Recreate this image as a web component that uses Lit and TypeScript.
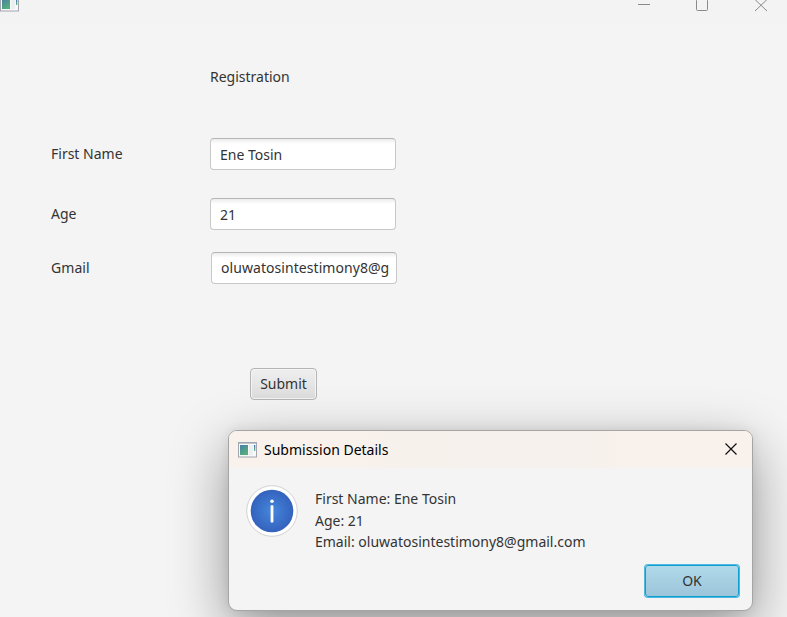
import { LitElement, html, css, svg } from "lit";
import { customElement, property } from "lit/decorators.js";

const cross = svg`<path d="M.5 .5L11.5 11.5M11.5 .5L.5 11.5" />`;

@customElement("window-icon")
class WindowIcon extends LitElement {
  static styles = css`
    :host { display: block; width: 19px; height: 16px; }
    svg { display: block; }
  `;
  render() {
    return html`<svg width="19" height="16" viewBox="0 0 19 16">
      <defs>
        <linearGradient id="pane" x1="0" y1="0" x2="0.6" y2="1">
          <stop offset="0" stop-color="#4a7fa6" /><stop offset="1" stop-color="#55b078" />
        </linearGradient>
        <linearGradient id="bar" x1="0" y1="0" x2="0" y2="1">
          <stop offset="0" stop-color="#4668b8" /><stop offset="1" stop-color="#62bd84" />
        </linearGradient>
      </defs>
      <rect x=".5" y=".5" width="18" height="14.5" fill="#f7f8fa" stroke="#a3a6ae" />
      <rect x="1" y="1" width="17" height="1" fill="#c3c6ce" />
      <rect x="2" y="3" width="8" height="10" fill="url(#pane)" />
      <rect x="11" y="3" width="4" height="10" fill="#eceeef" />
      <rect x="16" y="3" width="1.3" height="6" fill="url(#bar)" />
    </svg>`;
  }
}

@customElement("form-row")
class FormRow extends LitElement {
  @property() label = "";
  @property() value = "";
  static styles = css`
    :host { display: grid; grid-template-columns: 159px 186px; align-items: center; height: 32px; }
    .field {
      box-sizing: border-box; height: 32px; padding: 0 5px 0 9px; line-height: var(--field-line, 31px);
      border: 1px solid #c8c8c8; border-top-color: #b5b5b5; border-radius: 4px;
      background: linear-gradient(#ececec, #fff 5px); overflow: hidden; white-space: nowrap;
    }
  `;
  render() {
    return html`<span>${this.label}</span><div class="field"><span>${this.value}</span></div>`;
  }
}

@customElement("submission-dialog")
class SubmissionDialog extends LitElement {
  static styles = css`
    :host {
      display: flex; flex-direction: column; box-sizing: border-box; width: 525px; height: 181px;
      border: 1px solid #a5a5a5; border-radius: 9px; background: #f4f4f4; overflow: hidden;
      box-shadow: 0 18px 56px rgba(0,0,0,.4), 0 0 12px rgba(0,0,0,.08);
    }
    .bar {
      display: flex; align-items: center; height: 37px; padding: 0 15px 0 9px; color: #000;
      background: linear-gradient(90deg, #f9f1ec, #f6f1ed 60%, #f9f1ec 85%);
    }
    .title { margin-left: 7px; flex: 1; }
    .close { stroke: #111; stroke-width: 1.2; fill: none; margin-bottom: 2px; }
    .body { display: flex; flex: 1; padding: 17px 0 0 17px; }
    .text { margin: 3px 0 0 17px; line-height: 21.5px; white-space: nowrap; }
    .actions { display: flex; justify-content: flex-end; padding: 0 13px 13px 0; }
    .ok {
      box-sizing: border-box; width: 94px; height: 32px; border: 1px solid #0f9fd2; border-radius: 3px;
      font: inherit; color: inherit; padding: 0; background: linear-gradient(#b0d9ea, #9cc5da);
      box-shadow: 0 0 0 1px #4fb8dd;
    }
  `;
  render() {
    return html`
      <div class="bar">
        <window-icon></window-icon>
        <span class="title"><span>Submission Details</span></span>
        <svg class="close" width="12" height="12">${cross}</svg>
      </div>
      <div class="body">
        <svg width="52" height="52" viewBox="0 0 52 52">
          <defs><radialGradient id="blue"><stop offset="0" stop-color="#4587dc" /><stop offset="1" stop-color="#3462bd" /></radialGradient></defs>
          <circle cx="26" cy="26" r="25.3" fill="#fff" stroke="#d2d2d2" />
          <circle cx="26" cy="26" r="21.3" fill="url(#blue)" />
          <circle cx="26" cy="16.3" r="1.8" fill="#fff" />
          <rect x="24.6" y="20.3" width="2.8" height="17.2" rx=".7" fill="#fff" />
        </svg>
        <div class="text"><span>First Name: Ene Tosin</span><br /><span>Age: 21</span><br /><span>Email: oluwatosintestimony8@gmail.com</span></div>
      </div>
      <div class="actions"><button class="ok"><span>OK</span></button></div>`;
  }
}

@customElement("app-root")
class AppRoot extends LitElement {
  static styles = css`
    :host {
      display: block; position: relative; width: 787px; height: 617px; overflow: hidden;
      background: #f4f4f4; color: #333; font: 14px/20px "Noto Sans", "Open Sans", sans-serif;
    }
    .chrome { display: flex; height: 24px; justify-content: space-between; background: #f3f3f3; }
    .chrome window-icon { margin-top: -4px; }
    .controls { display: block; fill: none; stroke: #8a8a8a; }
    .form { padding: 43px 0 0 51px; }
    .heading { margin: 0 0 51px 159px; }
    .age { margin-top: 28px; }
    .mail { margin-top: 22px; grid-template-columns: 160px 186px; letter-spacing: .06px; --field-line: 29px; }
    .submit {
      display: block; box-sizing: border-box; width: 67px; height: 32px; margin: 84px 0 0 199px; padding: 0;
      border: 1px solid #b5b5b5; border-radius: 4px; background: linear-gradient(#efefef, #dcdcdc);
      box-shadow: inset 0 0 0 1px #f4f4f4; font: inherit; color: inherit;
    }
    .dialog { position: absolute; left: 228px; top: 430px; }
  `;
  render() {
    return html`
      <div class="chrome">
        <window-icon></window-icon>
        <svg class="controls" width="150" height="24" viewBox="637 0 150 24">
          <path d="M638 4.5H650" />
          <rect x="696.5" y="-.5" width="11" height="11" rx="1" />
          <path d="M755 -.5L767 11M767 -.5L755 11" />
        </svg>
      </div>
      <div class="form">
        <div class="heading"><span>Registration</span></div>
        <form-row label="First Name" value="Ene Tosin"></form-row>
        <form-row class="age" label="Age" value="21"></form-row>
        <form-row class="mail" label="Gmail" value="oluwatosintestimony8@g"></form-row>
        <button class="submit"><span>Submit</span></button>
      </div>
      <submission-dialog class="dialog"></submission-dialog>`;
  }
}
